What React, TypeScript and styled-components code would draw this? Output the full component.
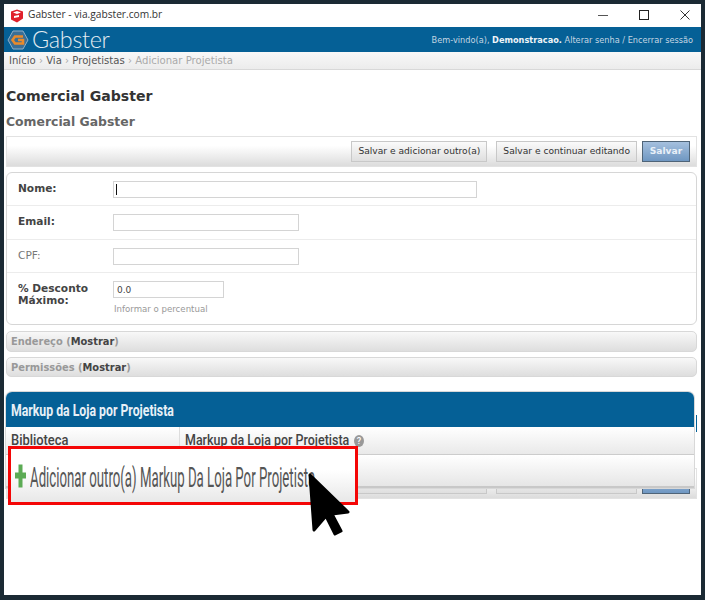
import React from "react";
import styled, { createGlobalStyle } from "styled-components";

const Global = createGlobalStyle`
  html, body { margin: 0; padding: 0; width: 705px; height: 600px; overflow: hidden; background: #1b2a34; }
  * { box-sizing: border-box; }
`;

const Frame = styled.div`
  width: 705px; height: 600px; padding: 4px 4px 5px 4px; background: #1b2a34;
`;
const Win = styled.div`
  position: relative; width: 697px; height: 591px; background: #fff; overflow: hidden;
  font-family: "DejaVu Sans", Verdana, sans-serif; color: #333;
`;
const TitleBar = styled.div`
  height: 23px; display: flex; align-items: center; padding-left: 6px; background: #fff;
  font-family: "Open Sans", "Noto Sans", sans-serif; font-size: 10.2px; color: #333;
`;
const AppIcon = styled.svg` flex: none; `;
const TitleText = styled.span` margin-left: 4px; flex: 1; position: relative; top: -2px; `;
const WinControls = styled.div` display: flex; align-items: center; padding-right: 11px; gap: 31px; position: relative; top: -1px; `;
const Header = styled.div`
  height: 25px; background: #056096; display: flex; align-items: center; justify-content: space-between;
  padding: 0 8px 0 3px; color: #d5e3ee;
`;
const Brand = styled.div` display: flex; align-items: center; gap: 3px; `;
const BrandName = styled.span`
  font-family: "Lato", "Open Sans", sans-serif; font-weight: 300; font-size: 23.4px; color: #e4edf3; line-height: 25px; letter-spacing: -0.3px;
`;
const Welcome = styled.div`
  font-size: 8.2px; color: #c4d6e3; white-space: nowrap; strong { color: #eef4f8; }
`;
const Crumbs = styled.div`
  height: 18px; background: linear-gradient(#f8f8f8, #ececec); border-bottom: 1px solid #d8d8d8;
  padding: 0 5px; font-size: 10.1px; line-height: 17px; color: #555; white-space: nowrap;
`;
const CrumbSep = styled.span` color: #aaa; `;
const CrumbLast = styled.span` color: #aaa; `;
const Content = styled.div` padding: 17px 0 0 2px; width: 693px; `;
const H1 = styled.h1` margin: 0; font-size: 14.1px; line-height: 18px; font-weight: 700; color: #333; `;
const H2 = styled.h2` margin: 8px 0 0; font-size: 12.4px; line-height: 18px; font-weight: 700; color: #666; `;
const Toolbar = styled.div<{ $flush?: boolean }>`
  height: 31px; width: 691px; display: flex; justify-content: flex-end; align-items: center; gap: 9px;
  padding-right: 6px; border: 1px solid #e2e2e2; background: linear-gradient(#fff 30%, #dcdcdc);
  margin-top: ${(p) => (p.$flush ? "-20px" : "5px")};
`;
const Btn = styled.button<{ $primary?: boolean }>`
  height: 21px; margin: 0; font-family: inherit; font-size: 9.15px; line-height: 19px;
  width: ${(p) => (p.$primary ? "48px" : "auto")};
  margin-left: ${(p) => (p.$primary ? "-4px" : "0")};
  padding: ${(p) => (p.$primary ? "0" : "0 6px")};
  color: ${(p) => (p.$primary ? "#e8f0f8" : "#333")};
  font-weight: ${(p) => (p.$primary ? 700 : 400)};
  border: 1px solid ${(p) => (p.$primary ? "#4f6478" : "#c8c8c8")};
  background: ${(p) => (p.$primary ? "linear-gradient(#a5c0de, #6f97c2)" : "linear-gradient(#fafafa, #dfdfdf)")};
`;
const Card = styled.div`
  margin-top: 5px; width: 691px; height: 153px; border: 1px solid #d6d6d6; border-radius: 6px; background: #fff;
`;
const Row = styled.div<{ $h: number }>`
  display: grid; grid-template-columns: 95px 1fr; height: ${(p) => p.$h}px;
  padding: 8px 0 0 11px; border-bottom: 1px solid #ececec; &:last-child { border-bottom: 0; }
`;
const Label = styled.label<{ $plain?: boolean }>`
  font-size: 10.6px; line-height: 12px; padding-top: 1px;
  font-weight: ${(p) => (p.$plain ? 400 : 700)};
  color: ${(p) => (p.$plain ? "#777" : "#444")};
`;
const FieldBox = styled.div<{ $w: number }>`
  position: relative; width: ${(p) => p.$w}px; height: 17px; border: 1px solid #d4d4d4; background: #fff;
  font-size: 9px; line-height: 16px; padding-left: 3px; color: #444;
`;
const Caret = styled.span`
  position: absolute; left: 2px; top: 2px; width: 1px; height: 11px; background: #111;
`;
const Hint = styled.div` margin-top: 5px; padding-left: 1px; font-size: 8.6px; line-height: 12px; color: #999; `;
const Fold = styled.div<{ $h: number; $gap: number }>`
  width: 691px; height: ${(p) => p.$h}px; margin-top: ${(p) => p.$gap}px; border: 1px solid #d8d8d8; border-radius: 5px;
  background: linear-gradient(#f8f8f8, #dedede); padding-left: 4px; font-size: 9.9px; line-height: ${(p) => p.$h - 1}px; font-weight: 700; color: #999;
  strong { color: #444; }
`;
const Group = styled.div`
  position: relative; z-index: 1; margin-top: 15px; width: 688px; height: 96px; background: #fff;
  box-shadow: 0 0 0 1px #d8d8d8;
  border-radius: 6px 6px 0 0;
  &::after {
    content: ""; position: absolute; right: -3px; top: 23px; width: 1px; height: 17px; background: #056096;
  }
`;
const GroupHead = styled.div`
  height: 35px; background: #056096; border-radius: 6px 6px 0 0; padding-left: 5px;
  font-family: "Roboto", sans-serif; font-weight: 700; font-size: 16px; line-height: 38px; color: #e8f0f6;
`;
const Squeeze = styled.span<{ $x: number }>`
  display: inline-block; transform: scaleX(${(p) => p.$x}); transform-origin: left center; white-space: nowrap;
`;
const THead = styled.div`
  height: 28px; display: grid; grid-template-columns: 173px 1fr; background: linear-gradient(#fff, #e9e9e9);
  border-bottom: 1px solid #ccc; color: #444;
  font-family: "Roboto", sans-serif; font-weight: 500; font-size: 15px; line-height: 26px;
`;
const THCell = styled.div` padding-left: 5px; white-space: nowrap; & + & { border-left: 1px solid #ddd; } `;
const HelpIcon = styled.span`
  display: inline-flex; justify-content: center; align-items: center; width: 10px; height: 12px; border-radius: 50%;
  background: #999; color: #fff; font-size: 9px; margin-left: -29px; vertical-align: 1px;
`;
const AddRow = styled.div` height: 33px; background: linear-gradient(#fff, #e6e6e6); border-bottom: 2px solid #c8c8c8; `;
const Highlight = styled.div`
  position: absolute; left: 4px; top: 442px; width: 350px; height: 59px; border: 3px solid #f40606; z-index: 2;
  background: linear-gradient(#fff 40%, #e8e8e8); display: flex; align-items: center; padding-left: 4px;
  color: #555; font-family: "Roboto", sans-serif; font-size: 27px; white-space: nowrap;
`;
const PlusIcon = styled.svg` flex: none; `;
const AddText = styled.span`
  display: inline-block; transform: scaleX(0.49); transform-origin: left center; margin-left: 4px; position: relative; top: 2px;
`;
const Cursor = styled.svg` position: absolute; left: 304px; top: 469px; z-index: 3; `;

export default function App() {
  return (
    <Frame>
      <Global />
      <Win>
        <TitleBar>
          <AppIcon width="14" height="14" viewBox="0 0 14 14">
            <path d="M1 2.5 7 .5l6 2v7l-6 4-6-3z" fill="#e0212c" />
            <path d="M3 3.5 7 2l4 1.5-4 1.5zM4 7l5-1v2l-5 1z" fill="#fff" />
          </AppIcon>
          <TitleText>Gabster - via.gabster.com.br</TitleText>
          <WinControls>
            <svg width="10" height="10" viewBox="0 0 10 10"><path d="M0 5.5h10" stroke="#555" strokeWidth="1" /></svg>
            <svg width="10" height="10" viewBox="0 0 10 10"><rect x=".5" y=".5" width="9" height="9" fill="none" stroke="#222" /></svg>
            <svg width="10" height="10" viewBox="0 0 10 10"><path d="M.5.5l9 9M9.5.5l-9 9" stroke="#333" strokeWidth="1" /></svg>
          </WinControls>
        </TitleBar>
        <Header>
          <Brand>
            <svg width="22" height="20" viewBox="0 0 22 20">
              <path d="M6 1h10l5 9-5 9H6L1 10z" fill="#3b6f96" stroke="#8fb0c8" strokeWidth="1" />
              <path d="M16 6.5H8L5.5 10 8 13.5h8V10h-5" fill="none" stroke="#e98a2b" strokeWidth="2.6" />
            </svg>
            <BrandName>Gabster</BrandName>
          </Brand>
          <Welcome>Bem-vindo(a), <strong>Demonstracao.</strong> Alterar senha / Encerrar sessão</Welcome>
        </Header>
        <Crumbs>
          Início <CrumbSep>›</CrumbSep> Via <CrumbSep>›</CrumbSep> Projetistas <CrumbSep>›</CrumbSep> <CrumbLast>Adicionar Projetista</CrumbLast>
        </Crumbs>
        <Content>
          <H1>Comercial Gabster</H1>
          <H2>Comercial Gabster</H2>
          <Toolbar>
            <Btn>Salvar e adicionar outro(a)</Btn>
            <Btn>Salvar e continuar editando</Btn>
            <Btn $primary>Salvar</Btn>
          </Toolbar>
          <Card>
            <Row $h={33}>
              <Label>Nome:</Label>
              <FieldBox $w={364}><Caret /></FieldBox>
            </Row>
            <Row $h={34}>
              <Label>Email:</Label>
              <FieldBox $w={186} />
            </Row>
            <Row $h={33}>
              <Label $plain>CPF:</Label>
              <FieldBox $w={186} />
            </Row>
            <Row $h={52}>
              <Label>% Desconto Máximo:</Label>
              <div>
                <FieldBox $w={111}>0.0</FieldBox>
                <Hint>Informar o percentual</Hint>
              </div>
            </Row>
          </Card>
          <Fold $h={21} $gap={6}>Endereço (<strong>Mostrar</strong>)</Fold>
          <Fold $h={20} $gap={5}>Permissões (<strong>Mostrar</strong>)</Fold>
          <Group>
            <GroupHead><Squeeze $x={0.767}>Markup da Loja por Projetista</Squeeze></GroupHead>
            <THead>
              <THCell><Squeeze $x={0.86}>Biblioteca</Squeeze></THCell>
              <THCell><Squeeze $x={0.83}>Markup da Loja por Projetista</Squeeze><HelpIcon>?</HelpIcon></THCell>
            </THead>
            <AddRow />
          </Group>
          <Toolbar $flush>
            <Btn>Salvar e adicionar outro(a)</Btn>
            <Btn>Salvar e continuar editando</Btn>
            <Btn $primary>Salvar</Btn>
          </Toolbar>
        </Content>
        <Highlight>
          <PlusIcon width="11" height="24" viewBox="0 0 11 24">
            <path d="M3.5 0.5h4v8H11v6H7.5v9h-4v-9H0v-6h3.5z" fill="#5cab55" />
          </PlusIcon>
          <AddText>Adicionar outro(a) Markup Da Loja Por Projetista</AddText>
        </Highlight>
        <Cursor width="48" height="66" viewBox="304 469 48 66">
          <path d="M306 471l38 37-16 2 9 17-6 3-9-18-12 14z" fill="#000" stroke="#000" strokeWidth="3" strokeLinejoin="round" />
        </Cursor>
      </Win>
    </Frame>
  );
}
